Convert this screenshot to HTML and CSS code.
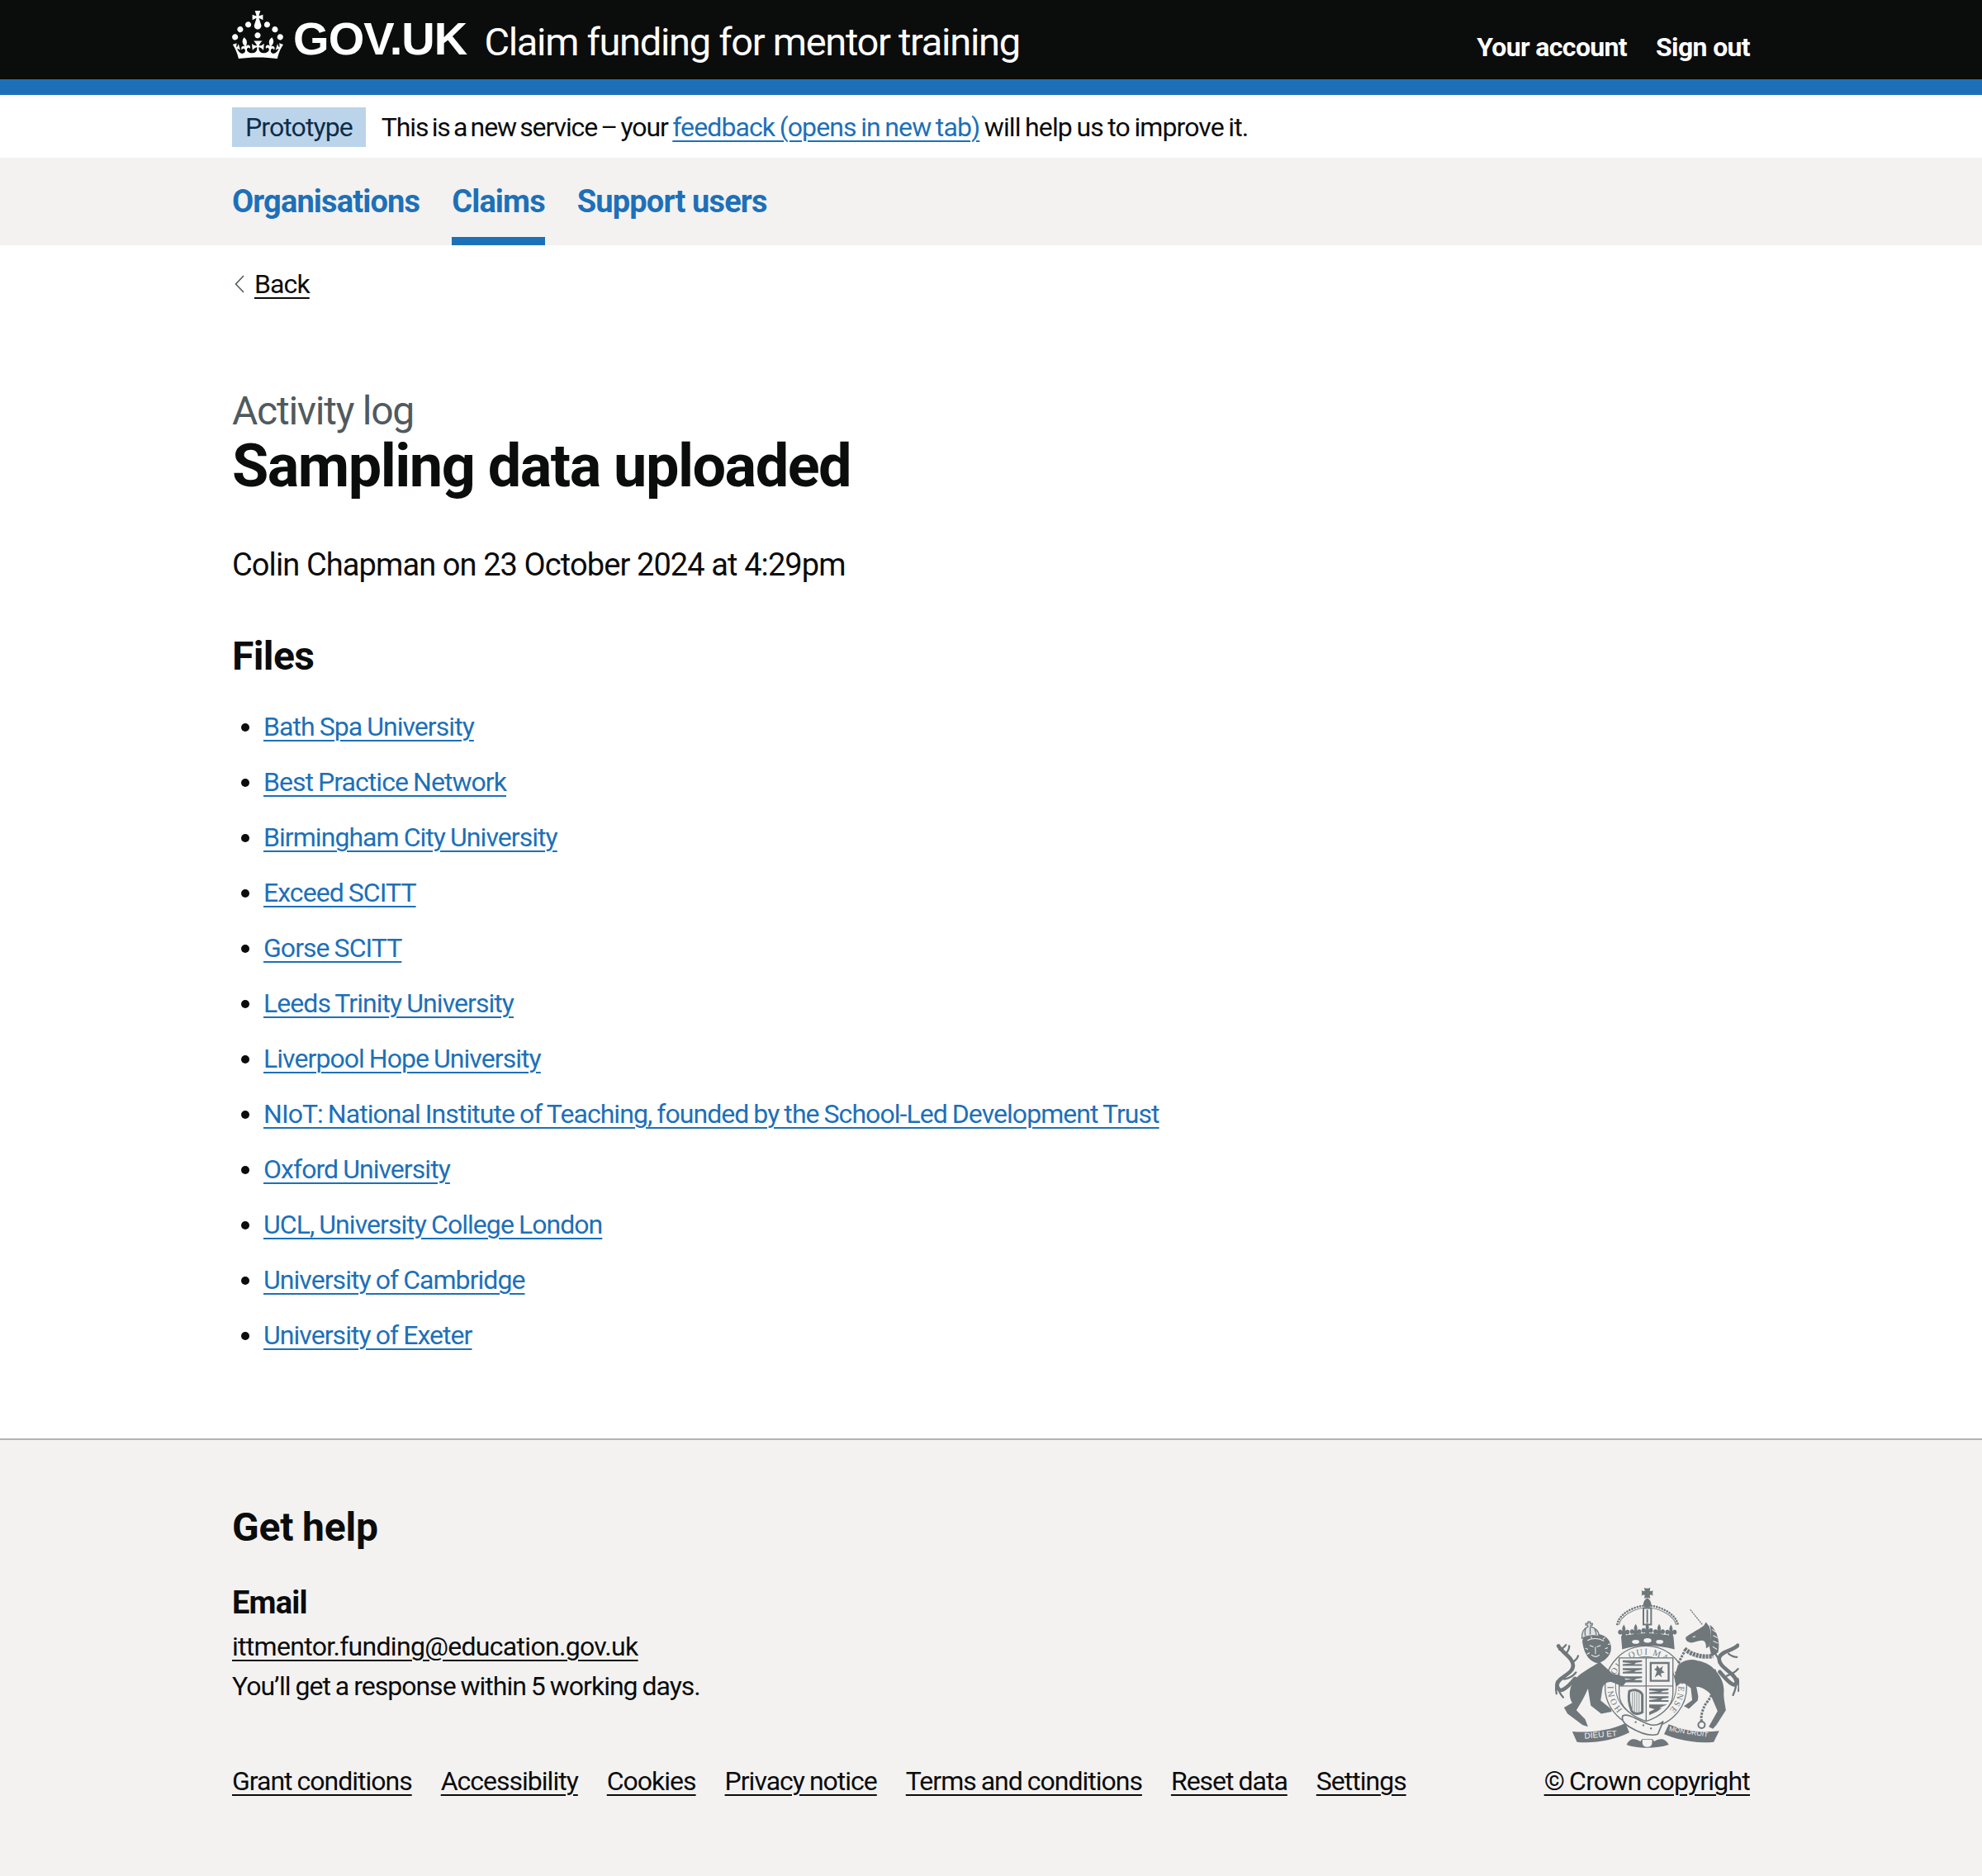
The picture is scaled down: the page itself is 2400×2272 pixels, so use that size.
FILE: index.html
```html
<!DOCTYPE html>
<html lang="en">
<head>
    <meta charset="UTF-8">
    <meta name="viewport" content="width=device-width, initial-scale=1.0">
    <title>Sampling data uploaded</title>
    <link rel="stylesheet" href="styles.css">
</head>
<body>
<header class="site-header">
    <div class="container header-row">
        <a class="logo" href="#">
            <svg class="crown" viewBox="0 0 32 30" aria-hidden="true"><path fill="currentColor" d="M22.6 10.4c-1 .4-2-.1-2.4-1-.4-.9.1-2 1-2.4.9-.4 2 .1 2.4 1s-.1 2-1 2.4m-5.9 6.7c-.9.4-2-.1-2.4-1-.4-.9.1-2 1-2.4.9-.4 2 .1 2.4 1s-.1 2-1 2.4m10.8-3.7c-1 .4-2-.1-2.4-1-.4-.9.1-2 1-2.4.9-.4 2 .1 2.4 1s0 2-1 2.4m3.3 4.8c-1 .4-2-.1-2.4-1-.4-.9.1-2 1-2.4.9-.4 2 .1 2.4 1s-.1 2-1 2.4M17 4.7l2.3 1.2V2.5l-2.3.7-.2-.2.9-3h-3.4l.9 3-.2.2c-.1.1-2.3-.7-2.3-.7v3.4L15 4.7c.1.1.1.2.2.2l-1.3 4c-.1.2-.1.4-.1.6 0 1.1.8 2 1.9 2.2h.7c1-.2 1.9-1.1 1.9-2.2 0-.2 0-.4-.1-.6l-1.3-4c-.1-.1 0-.2.1-.2m-7.6 5.7c.9.4 2-.1 2.4-1 .4-.9-.1-2-1-2.4-.9-.4-2 .1-2.4 1s0 2 1 2.4m-5 3c.9.4 2-.1 2.4-1 .4-.9-.1-2-1-2.4-.9-.4-2 .1-2.4 1s.1 2 1 2.4m-3.2 4.8c.9.4 2-.1 2.4-1 .4-.9-.1-2-1-2.4-.9-.4-2 .1-2.4 1s0 2 1 2.4m14.8 11c4.4 0 8.6.3 12.3.8 1.1-4.5 2.4-7 3.7-8.8l-2.5-.9c.2 1.3.3 1.9 0 2.7-.4-.4-.8-1.1-1.1-2.3l-1.2 4c.7-.5 1.3-.8 2-.9-1.1 2.5-2.6 3.1-3.5 3-1.1-.2-1.7-1.2-1.5-2.1.3-1.2 1.5-1.5 2.1-.1 1.1-2.3-.8-3-2-2.3 1.9-1.9 2.1-3.5.6-5.6-2.1 1.6-2.1 3.2-1.2 5.5-1.2-1.4-3.2-.6-2.5 1.6.9-1.4 2.1-.5 1.9.8-.2 1.1-1.7 2.1-3.5 1.9-2.7-.2-2.9-2.1-2.9-3.6.7-.1 1.9.5 2.9 1.9l.4-4.3c-1.1 1.1-2.1 1.4-3.2 1.4.4-1.2 2.1-3 2.1-3h-5.4s1.7 1.9 2.1 3c-1.1 0-2.1-.2-3.2-1.4l.4 4.3c1-1.4 2.2-2 2.9-1.9-.1 1.5-.2 3.4-2.9 3.6-1.9.2-3.4-.8-3.5-1.9-.2-1.3 1-2.2 1.9-.8.7-2.3-1.2-3-2.5-1.6.9-2.2.9-3.9-1.2-5.5-1.5 2-1.3 3.7.6 5.6-1.2-.7-3.1 0-2 2.3.6-1.4 1.8-1.1 2.1.1.2.9-.3 1.9-1.5 2.1-.9.2-2.4-.5-3.5-3 .6 0 1.2.3 2 .9l-1.2-4c-.3 1.1-.7 1.9-1.1 2.3-.3-.8-.2-1.4 0-2.7l-2.5.9c1.3 1.9 2.6 4.4 3.7 8.8 3.7-.5 7.9-.8 12.3-.8"/></svg>
            <span class="logotype">GOV.UK</span>
        </a>
        <a class="service-name" href="#">Claim funding for mentor training</a>
        <nav class="account-nav">
            <a href="#">Your account</a>
            <a href="#">Sign out</a>
        </nav>
    </div>
</header>

<div class="container phase-banner">
    <strong class="tag">Prototype</strong>
    <span><span class="phase-lead">This is a new service – your</span> <a class="link" href="#">feedback (opens in new tab)</a> will help us to improve it.</span>
</div>

<nav class="primary-nav">
    <div class="container primary-nav-row">
        <a href="#">Organisations</a>
        <a href="#" class="current">Claims</a>
        <a href="#">Support users</a>
    </div>
</nav>

<main class="container">
    <a class="back-link" href="#"><svg class="back-chevron" viewBox="0 0 12 22" aria-hidden="true"><path d="M11 1L1.5 11L11 21"/></svg>Back</a>

    <span class="caption">Activity log</span>
    <h1>Sampling data uploaded</h1>
    <p class="byline">Colin Chapman on 23 October 2024 at 4:29pm</p>

    <h2>Files</h2>
    <ul class="file-list">
        <li><a class="link" href="#">Bath Spa University</a></li>
        <li><a class="link" href="#">Best Practice Network</a></li>
        <li><a class="link" href="#">Birmingham City University</a></li>
        <li><a class="link" href="#">Exceed SCITT</a></li>
        <li><a class="link" href="#">Gorse SCITT</a></li>
        <li><a class="link" href="#">Leeds Trinity University</a></li>
        <li><a class="link" href="#">Liverpool Hope University</a></li>
        <li><a class="link" href="#">NIoT: National Institute of Teaching, founded by the School-Led Development Trust</a></li>
        <li><a class="link" href="#">Oxford University</a></li>
        <li><a class="link" href="#">UCL, University College London</a></li>
        <li><a class="link" href="#">University of Cambridge</a></li>
        <li><a class="link" href="#">University of Exeter</a></li>
    </ul>
</main>

<footer class="site-footer">
    <div class="container footer-row">
        <div class="footer-main">
            <h2>Get help</h2>
            <h3>Email</h3>
            <p class="footer-email"><a href="#">ittmentor.funding@education.gov.uk</a></p>
            <p class="footer-note">You’ll get a response within 5 working days.</p>
            <div class="footer-links">
                <a href="#">Grant conditions</a>
                <a href="#">Accessibility</a>
                <a href="#">Cookies</a>
                <a href="#">Privacy notice</a>
                <a href="#">Terms and conditions</a>
                <a href="#">Reset data</a>
                <a href="#">Settings</a>
            </div>
        </div>
        <div class="footer-crest">
            <svg class="crest" viewBox="130 65 670 590" aria-hidden="true">
                <defs>
                    <path id="garter" d="M377 513A118 118 0 1 1 547 513"/>
                    <path id="fleur" d="M0-24C6-15 8-7 4 0C10-7 21-7 21 4C21 12 12 15 8 10L6 24H-6L-8 10C-12 15-21 12-21 4C-21-7-10-7-4 0C-8-7-6-15 0-24Z"/>
                </defs>
                <!-- crown on top -->
                <path d="M456 70C462 74 472 74 478 70L476 82C480 84 483 84 488 80C486 88 486 92 488 100C483 96 480 96 476 98L478 110C472 106 462 106 456 110L458 98C454 96 451 96 446 100C448 92 448 88 446 80C451 84 454 84 458 82Z"/>
                <path d="M467 108C478 116 484 126 480 136L476 142H458L454 136C450 126 456 116 467 108Z"/>
                <path class="crest-dots" d="M358 203C364 168 410 142 452 136M482 136C524 142 570 168 578 203"/>
                <path class="crest-arch" d="M364 205C372 172 414 150 452 144M482 144C520 150 562 172 572 205"/>
                <path class="crest-pale" d="M453 144h28v60h-28zM467 150v48"/>
                <use href="#fleur" x="382" y="228"/>
                <use href="#fleur" x="425" y="226"/>
                <use href="#fleur" x="467" y="222"/>
                <use href="#fleur" x="510" y="226"/>
                <use href="#fleur" x="553" y="228"/>
                <path d="M372 246C440 232 494 232 562 246L566 294C500 276 432 276 376 294Z"/>
                <g class="crest-gem">
                    <ellipse cx="425" cy="267" rx="13" ry="7"/>
                    <ellipse cx="468" cy="262" rx="14" ry="8"/>
                    <ellipse cx="512" cy="267" rx="13" ry="7"/>
                </g>
                <!-- garter and shield -->
                <circle class="crest-ring" cx="462" cy="430" r="148"/>
                <circle class="crest-ring-thin" cx="462" cy="430" r="110"/>
                <text class="crest-garter"><textPath href="#garter">HONI SOIT QUI MAL Y PENSE</textPath></text>
                <path class="crest-shield" d="M365 325h195v130c0 50-50 85-97 100c-47-15-98-50-98-100z"/>
                <path class="crest-thin" d="M463 325v230M365 427h195"/>
                <g class="crest-beasts">
                    <path d="M378 334h70v6l-22 3-6 5h28v6h-70v-6l34-4-34-3zM378 362h70v6l-22 3-6 5h28v6h-70v-6l34-4-34-3zM378 392h70v6l-22 3-6 5h28v8h-70v-8l34-4-34-3z"/>
                    <path d="M476 340h72v72h-72zM483 347v58h58v-58z"/>
                    <path d="M494 396l8-22-10-8 8-4 2-10 10 12 12-10-4 16 10 8-14 4 4 14-12-10z"/>
                    <path d="M474 436h70v6l-22 3-6 5h28v6h-70v-6l34-4-34-3zM474 464h70v6l-22 3-6 5h28v6h-70v-6l34-4-34-3zM474 494h66l-20 8-10 5h10l-16 12-30 14v-12l20-10-20-6z"/>
                </g>
                <path class="crest-harp" d="M402 446C425 436 446 446 449 460V522C432 532 416 528 410 516C400 492 398 468 402 446Z"/>
                <path class="crest-harp-strings" d="M413 450V515M421 448V520M429 448V524M437 452V524"/>
                <!-- lion -->
                <path class="crest-tail" d="M205 400C172 440 146 458 140 425C138 395 200 385 198 352C195 322 165 312 145 282"/>
                <path class="crest-tail-thin" d="M165 402C180 400 195 395 208 378M195 342C205 335 214 328 216 318M172 310C180 300 184 292 184 282M143 425C145 445 152 458 162 468M148 295C160 292 165 288 172 278M140 410C135 425 135 440 138 455"/>
                <path d="M295 340C255 365 215 385 200 410C182 435 182 470 195 488L165 505L178 528L232 568L252 575L242 548L210 515C225 490 240 465 252 436L262 498L300 528L338 520L335 510L298 480L305 432C315 412 330 408 350 418L378 428L392 410L380 392L340 382Z"/>
                <path d="M232 270C228 250 250 238 280 238C315 238 338 262 336 292C334 318 315 335 290 345C262 340 240 320 232 270Z"/>
                <path class="crest-detail" d="M250 262C268 252 292 254 310 264M258 280l14 5M298 280l-14 5M279 285v26M264 314c10 8 22 8 30 0M242 290l10 4M324 288l-10 4M326 310l-10-6M248 312l10-6M314 250l-8 8M262 246l4 8M334 274l-10 2"/>
                <path class="crest-small-crown" d="M230 254C228 232 238 217 252 212L250 206H244V200H252V194H260V200H268V206H262V212C278 216 292 228 292 246C270 242 248 245 230 254ZM244 216C240 226 240 236 242 246M260 214V240M276 222C280 228 282 236 282 242"/>
                <!-- unicorn -->
                <path class="crest-horn" d="M623 150L668 206"/>
                <path class="crest-tail" d="M730 376C760 412 790 440 790 410C788 380 722 360 728 325C734 300 778 300 795 280"/>
                <path class="crest-tail-thin" d="M755 390C770 385 785 380 796 365M728 330C722 322 716 316 712 306M762 310C772 318 780 322 792 322M790 410C790 430 785 445 778 460M795 400C800 415 800 430 798 445"/>
                <path d="M578 352C600 332 625 328 650 335C680 340 705 355 722 380C738 400 745 425 745 445C742 470 750 495 752 515L718 568L705 582L690 575L722 518L695 455C680 440 660 430 645 430L652 465L650 480L618 510L600 500L630 478L625 435C612 425 600 415 590 415L572 430L565 395Z"/>
                <path d="M607 250C625 235 650 225 672 208L680 195L692 212C700 235 700 265 690 285L680 290C682 272 675 262 665 262C650 262 640 270 625 270C612 268 604 260 607 250Z"/>
                <path d="M694 205C722 225 732 270 724 305L700 320L692 282C698 255 700 230 694 205Z"/>
                <path class="crest-detail" d="M702 222L716 232M706 244L722 252M706 264L724 272M704 284L720 294M632 250l10-3"/>
                <path class="crest-collar" d="M602 292C630 316 665 324 706 318"/>
                <path class="crest-chain" d="M710 368C730 400 700 470 680 490C668 510 660 535 664 555"/>
                <circle class="crest-ringlet" cx="664" cy="568" r="12"/>
                <path class="crest-chain" d="M600 305L578 348"/>
                <!-- motto -->
                <path d="M195 592C250 598 330 590 388 562L402 596C345 625 270 636 212 630Z"/>
                <path d="M545 566C600 590 660 598 728 590L708 630C650 636 585 626 528 602Z"/>
                <path class="crest-scroll" d="M378 535C400 525 430 550 470 565C495 574 515 566 525 555L505 602C475 612 430 592 400 574C385 565 372 550 378 535Z"/>
                <path class="crest-scroll-dots" d="M425 558L490 585"/>
                <path d="M392 640C405 612 425 618 442 628L448 620H486L492 628C508 618 530 612 545 640C500 655 430 655 392 640Z"/>
                <path class="crest-buckle" d="M452 622V634C452 650 482 650 482 634V622"/>
                <text class="crest-motto" x="240" y="618" transform="rotate(-4.5 240 618)">DIEU ET</text>
                <text class="crest-motto crest-motto-small" x="545" y="590" transform="rotate(9 545 590)">MON DROIT</text>
            </svg>
            <a class="crown-copyright" href="#">© Crown copyright</a>
        </div>
    </div>
</footer>
</body>
</html>
```

FILE: styles.css
```css
* {
    box-sizing: border-box;
}
html {
    height: 100%;
}
body {
    margin: 0;
    min-height: 100%;
    display: flex;
    flex-direction: column;
    font-family: Roboto, "Liberation Sans", Arial, sans-serif;
    font-size: 38px;
    line-height: 50px;
    color: #0b0c0c;
    background: #fff;
}
a {
    color: inherit;
}
.container {
    width: 1838px;
    margin: 0 auto;
}

/* header */
.site-header {
    background: #0b0c0c;
    border-bottom: 19px solid #1d70b8;
    height: 115px;
    color: #fff;
}
.site-header a {
    color: #fff;
    text-decoration: none;
}
.header-row {
    display: flex;
    height: 96px;
}
.logo {
    display: flex;
    align-items: flex-start;
    padding-top: 12px;
    margin-right: 21px;
}
.crown {
    width: 62px;
    height: 60px;
    margin-right: 12px;
}
.logotype {
    font-family: "Liberation Sans", Arial, sans-serif;
    font-weight: 700;
    font-size: 56px;
    letter-spacing: -0.9px;
    line-height: 70px;
}
.service-name {
    font-size: 47px;
    letter-spacing: -1.3px;
    line-height: 60px;
    padding-top: 21px;
}
.account-nav {
    margin-left: auto;
    display: flex;
    gap: 35px;
    font-size: 32px;
    letter-spacing: -0.65px;
    font-weight: 700;
    line-height: 40px;
    padding-top: 37px;
}

/* phase banner */
.phase-banner {
    height: 76px;
    padding-top: 1px;
    display: flex;
    align-items: center;
    gap: 19px;
    font-size: 32px;
    letter-spacing: -0.9px;
    word-spacing: -1.5px;
}
.phase-lead {
    letter-spacing: -1.1px;
    word-spacing: -2.6px;
}
.tag {
    background: #bbd4ea;
    color: #0c2d4a;
    font-weight: 400;
    font-size: 32px;
    line-height: 48px;
    padding: 0 16px;
}
.link {
    color: #1d70b8;
    text-underline-offset: 5px;
    text-decoration-thickness: 2px;
}

/* primary navigation */
.primary-nav {
    background: #f3f2f1;
    height: 106px;
}
.primary-nav-row {
    display: flex;
    gap: 39px;
}
.primary-nav a {
    height: 106px;
    padding-top: 28px;
    color: #1d70b8;
    font-weight: 700;
    letter-spacing: -0.85px;
    text-decoration: none;
}
.primary-nav .current {
    border-bottom: 10px solid #1d70b8;
}

/* main content */
.back-link {
    display: inline-flex;
    align-items: center;
    gap: 12px;
    margin-top: 27px;
    padding-left: 3px;
    font-size: 32px;
    letter-spacing: -0.9px;
    line-height: 40px;
    text-underline-offset: 5px;
    text-decoration-thickness: 2px;
}
.back-chevron {
    width: 12px;
    height: 22px;
    fill: none;
    stroke: #505a5f;
    stroke-width: 1.6;
}
.caption {
    display: block;
    margin-top: 101px;
    font-size: 48px;
    letter-spacing: -1.25px;
    line-height: 60px;
    color: #505a5f;
}
h1 {
    margin: -3px 0 54px;
    font-size: 72px;
    letter-spacing: -1.5px;
    line-height: 80px;
    font-weight: 700;
}
.byline {
    margin: 0 0 56px;
    letter-spacing: -0.9px;
}
h2 {
    margin: 0;
    font-size: 48px;
    letter-spacing: -0.6px;
    line-height: 60px;
    font-weight: 700;
}
.file-list {
    margin: 35px 0 0;
    padding: 0 0 0 38px;
    font-size: 32px;
    letter-spacing: -0.95px;
    word-spacing: -1px;
    line-height: 40px;
}
.file-list li {
    margin-bottom: 27px;
}

/* footer */
.site-footer {
    flex: 1;
    margin-top: 78px;
    background: #f3f2f1;
    border-top: 2px solid #b1b4b6;
    font-size: 32px;
    letter-spacing: -1px;
    word-spacing: -1px;
    line-height: 40px;
}
.footer-row {
    display: flex;
    justify-content: space-between;
    align-items: flex-end;
    padding-top: 76px;
}
.site-footer h2 {
    letter-spacing: -0.2px;
}
.site-footer h3 {
    margin: 36px 0 0;
    font-size: 38px;
    letter-spacing: -0.8px;
    line-height: 50px;
    font-weight: 700;
}
.footer-email {
    margin: 8px 0 0;
    letter-spacing: -0.7px;
}
.footer-note {
    margin: 8px 0 0;
}
.footer-links {
    display: flex;
    gap: 35px;
    margin-top: 75px;
}
.site-footer a {
    text-underline-offset: 5px;
    text-decoration-thickness: 2px;
}
.footer-crest {
    display: flex;
    flex-direction: column;
    align-items: center;
}
.crown-copyright {
    letter-spacing: -0.8px;
}
.crest {
    display: block;
    width: 224px;
    height: 197px;
    margin-bottom: 19px;
    fill: #6f777b;
}

/* crest details */
.crest-dots {
    fill: none;
    stroke: #6f777b;
    stroke-width: 8;
    stroke-linecap: round;
    stroke-dasharray: 0.1 10;
}
.crest-arch {
    fill: none;
    stroke: #6f777b;
    stroke-width: 3;
}
.crest-pale {
    fill: none;
    stroke: #6f777b;
    stroke-width: 6;
}
.crest-gem {
    fill: #f3f2f1;
}
.crest-ring {
    fill: #f3f2f1;
    stroke: #6f777b;
    stroke-width: 4;
}
.crest-ring-thin {
    fill: none;
    stroke: #6f777b;
    stroke-width: 3;
}
.crest-garter {
    font-family: "Liberation Serif", serif;
    font-size: 32px;
    letter-spacing: 4.8px;
    word-spacing: 0;
    fill: #6f777b;
}
.crest-shield {
    fill: #f3f2f1;
    stroke: #6f777b;
    stroke-width: 4;
}
.crest-thin {
    fill: none;
    stroke: #6f777b;
    stroke-width: 4;
}
.crest-harp {
    fill: #f3f2f1;
    stroke: #6f777b;
    stroke-width: 9;
}
.crest-harp-strings {
    fill: none;
    stroke: #a6abad;
    stroke-width: 4;
}
.crest-tail {
    fill: none;
    stroke: #6f777b;
    stroke-width: 14;
    stroke-linecap: round;
}
.crest-tail-thin {
    fill: none;
    stroke: #6f777b;
    stroke-width: 7;
    stroke-linecap: round;
}
.crest-detail {
    fill: none;
    stroke: #f3f2f1;
    stroke-width: 3;
}
.crest-small-crown {
    fill: #e1e2e2;
    stroke: #6f777b;
    stroke-width: 4;
}
.crest-collar {
    fill: none;
    stroke: #6f777b;
    stroke-width: 16;
    stroke-dasharray: 9 3;
}
.crest-horn {
    stroke: #6f777b;
    stroke-width: 4;
    stroke-dasharray: 6 3;
}
.crest-chain {
    fill: none;
    stroke: #6f777b;
    stroke-width: 9;
    stroke-dasharray: 8 4;
}
.crest-ringlet {
    fill: none;
    stroke: #6f777b;
    stroke-width: 6;
}
.crest-scroll {
    fill: #f3f2f1;
    stroke: #6f777b;
    stroke-width: 5;
}
.crest-scroll-dots {
    fill: none;
    stroke: #6f777b;
    stroke-width: 7;
    stroke-linecap: round;
    stroke-dasharray: 0.1 30;
}
.crest-buckle {
    fill: #f3f2f1;
    stroke: #f3f2f1;
    stroke-width: 5;
}
.crest-motto {
    font-family: "Liberation Sans", sans-serif;
    font-size: 30px;
    letter-spacing: 0;
    word-spacing: 0;
    fill: #f3f2f1;
}
.crest-motto-small {
    font-size: 25px;
}
```
